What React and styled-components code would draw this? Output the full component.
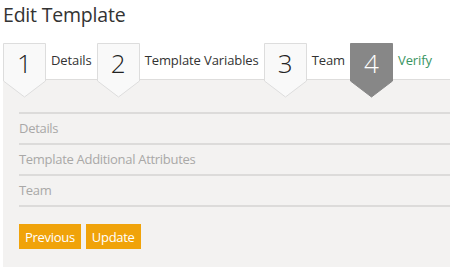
import React from "react";
import styled, { createGlobalStyle } from "styled-components";

const GlobalStyle = createGlobalStyle`
  html, body {
    margin: 0;
    padding: 0;
    background: #ffffff;
    font-family: "Segoe UI", "Open Sans", "Noto Sans", sans-serif;
    overflow: hidden;
  }
`;

const Page = styled.div`
  padding: 0 0 0 3px;
  height: 267px;
  display: flex;
  flex-direction: column;
`;

const Title = styled.h1`
  margin: 0;
  padding-top: 2px;
  height: 41px;
  font-size: 19.5px;
  font-weight: 400;
  color: #333;
  line-height: 26px;
  letter-spacing: -0.2px;
`;

const Steps = styled.div`
  display: flex;
  align-items: flex-start;
  height: 36px;
  position: relative;
  z-index: 2;
`;

const Step = styled.div`
  display: flex;
  align-items: flex-start;
`;

const BadgeWrap = styled.div`
  position: relative;
  width: 43px;
  height: 55px;
  flex-shrink: 0;
`;

const BadgeShape = styled.svg`
  position: absolute;
  inset: 0;
`;

const BadgeNumber = styled.span`
  position: relative;
  display: block;
  text-align: center;
  font-size: 26px;
  font-weight: 300;
  line-height: 40px;
  color: ${(p) => (p.$active ? "#ffffff" : "#222")};
`;

const Label = styled.span`
  padding: 0 5px 0 5px;
  font-size: 13px;
  line-height: 34px;
  color: ${(p) => (p.$active ? "#3a9563" : "#333")};
  white-space: nowrap;
  letter-spacing: -0.1px;
`;

const Panel = styled.div`
  flex: 1;
  background: #f3f2f1;
  border-top: 1px solid #dedddc;
  padding: 32px 0 0 16px;
`;

const Sections = styled.div`
  border-top: 2px solid #dcdbda;
`;

const Section = styled.div`
  height: 29px;
  line-height: 29px;
  border-bottom: 2px solid #dcdbda;
  font-size: 13px;
  color: #a9a8a7;
  letter-spacing: -0.3px;
`;

const Actions = styled.div`
  display: flex;
  gap: 5px;
  margin-top: 17px;
`;

const Button = styled.button`
  height: 25px;
  padding: 0 6px;
  border: none;
  background: #f0a30a;
  color: #fff;
  font-family: inherit;
  font-size: 13px;
  letter-spacing: -0.3px;
  cursor: pointer;
`;

function Badge({ n, active }) {
  return (
    <BadgeWrap>
      <BadgeShape width="43" height="55" viewBox="0 0 43 55">
        <polygon
          points="0.5,0.5 42.5,0.5 42.5,38 21.5,54 0.5,38"
          fill={active ? "#878787" : "#f9f9f9"}
          stroke={active ? "#878787" : "#dddddd"}
        />
      </BadgeShape>
      <BadgeNumber $active={active}>{n}</BadgeNumber>
    </BadgeWrap>
  );
}

const steps = [
  { n: 1, label: "Details" },
  { n: 2, label: "Template Variables" },
  { n: 3, label: "Team" },
  { n: 4, label: "Verify", active: true },
];

export default function App() {
  return (
    <Page>
      <GlobalStyle />
      <Title>Edit Template</Title>
      <Steps>
        {steps.map((s) => (
          <Step key={s.n}>
            <Badge n={s.n} active={s.active} />
            <Label $active={s.active}>{s.label}</Label>
          </Step>
        ))}
      </Steps>
      <Panel>
        <Sections>
          <Section>Details</Section>
          <Section>Template Additional Attributes</Section>
          <Section>Team</Section>
        </Sections>
        <Actions>
          <Button>Previous</Button>
          <Button>Update</Button>
        </Actions>
      </Panel>
    </Page>
  );
}
